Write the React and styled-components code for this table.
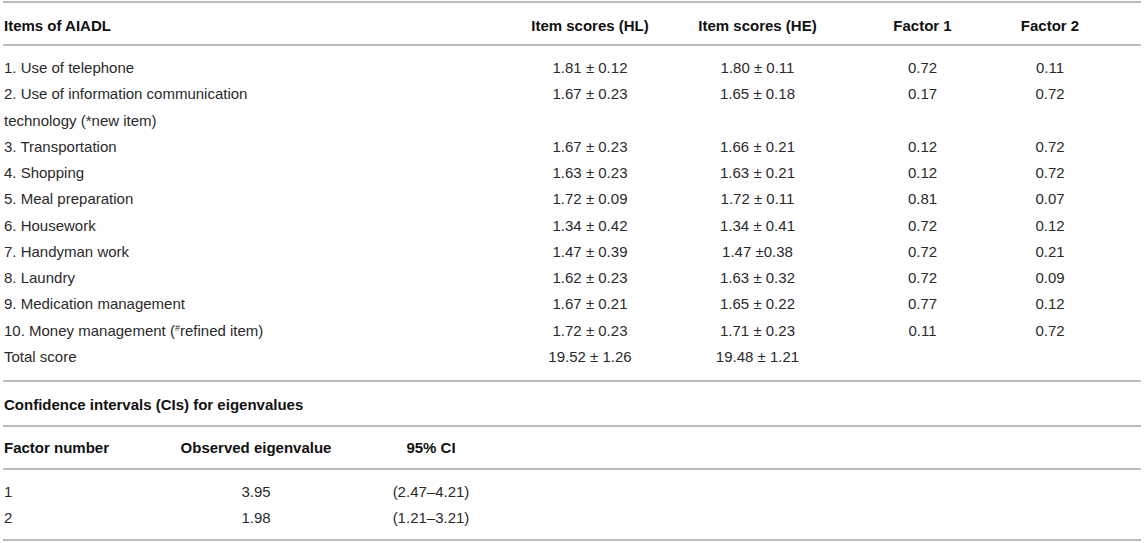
import styled, { createGlobalStyle } from "styled-components";

const GlobalStyle = createGlobalStyle`
  html, body {
    margin: 0;
    padding: 0;
    background: #ffffff;
  }
  body {
    font-family: "Liberation Sans", Arial, Helvetica, sans-serif;
    color: #2a2a2a;
  }
`;

const Page = styled.div`
  width: 1138px;
  padding: 1px 0 0 3px;
  font-size: 15px;
`;

const Rule = styled.div`
  height: 2px;
  background: #bdbdbd;
`;

const Grid = styled.div`
  display: grid;
  grid-template-columns: ${(p) => p.$cols};
  align-items: start;
`;

const HeadRow = styled(Grid)`
  height: ${(p) => p.$h || 40}px;
  align-items: center;
  padding-top: ${(p) => p.$pt || 0}px;
  box-sizing: border-box;
`;

const Body = styled.div`
  padding: ${(p) => p.$top}px 0 ${(p) => p.$bottom}px;
`;

const Row = styled(Grid)`
  min-height: ${(p) => p.$h}px;
  line-height: ${(p) => p.$h}px;
`;

const Cell = styled.div`
  padding-left: ${(p) => (p.$center ? 0 : 1)}px;
  text-align: ${(p) => (p.$center ? "center" : "left")};
  font-weight: ${(p) => (p.$bold ? 700 : 400)};
  color: ${(p) => (p.$bold ? "#111" : "#2a2a2a")};
  white-space: nowrap;

  sup {
    font-size: 9px;
    line-height: 0;
    vertical-align: 5px;
  }
`;

const Caption = styled.div`
  height: 43px;
  display: flex;
  align-items: center;
  padding: 2px 0 0 1px;
  box-sizing: border-box;
  font-weight: 700;
  color: #111;
`;

const mainCols = "502px 170px 165px 165px 90px";
const ciCols = "165px 176px 174px";

const items = [
  ["1. Use of telephone", "1.81 ± 0.12", "1.80 ± 0.11", "0.72", "0.11"],
  [
    <>
      2. Use of information communication
      <br />
      technology (*new item)
    </>,
    "1.67 ± 0.23",
    "1.65 ± 0.18",
    "0.17",
    "0.72",
  ],
  ["3. Transportation", "1.67 ± 0.23", "1.66 ± 0.21", "0.12", "0.72"],
  ["4. Shopping", "1.63 ± 0.23", "1.63 ± 0.21", "0.12", "0.72"],
  ["5. Meal preparation", "1.72 ± 0.09", "1.72 ± 0.11", "0.81", "0.07"],
  ["6. Housework", "1.34 ± 0.42", "1.34 ± 0.41", "0.72", "0.12"],
  ["7. Handyman work", "1.47 ± 0.39", "1.47 ±0.38", "0.72", "0.21"],
  ["8. Laundry", "1.62 ± 0.23", "1.63 ± 0.32", "0.72", "0.09"],
  ["9. Medication management", "1.67 ± 0.21", "1.65 ± 0.22", "0.77", "0.12"],
  [
    <>
      10. Money management (<sup>#</sup>refined item)
    </>,
    "1.72 ± 0.23",
    "1.71 ± 0.23",
    "0.11",
    "0.72",
  ],
  ["Total score", "19.52 ± 1.26", "19.48 ± 1.21", "", ""],
];

const eigen = [
  ["1", "3.95", "(2.47–4.21)"],
  ["2", "1.98", "(1.21–3.21)"],
];

export default function App() {
  return (
    <Page>
      <GlobalStyle />
      <Rule />
      <HeadRow $cols={mainCols} $h={41} $pt={3}>
        <Cell $bold>Items of AIADL</Cell>
        <Cell $bold $center>Item scores (HL)</Cell>
        <Cell $bold $center>Item scores (HE)</Cell>
        <Cell $bold $center>Factor 1</Cell>
        <Cell $bold $center>Factor 2</Cell>
      </HeadRow>
      <Rule />
      <Body $top={9} $bottom={10}>
        {items.map((r, i) => (
          <Row key={i} $cols={mainCols} $h={26.25}>
            <Cell>{r[0]}</Cell>
            <Cell $center>{r[1]}</Cell>
            <Cell $center>{r[2]}</Cell>
            <Cell $center>{r[3]}</Cell>
            <Cell $center>{r[4]}</Cell>
          </Row>
        ))}
      </Body>
      <Rule />
      <Caption>Confidence intervals (CIs) for eigenvalues</Caption>
      <Rule />
      <HeadRow $cols={ciCols} $h={41} $pt={0}>
        <Cell $bold>Factor number</Cell>
        <Cell $bold $center>Observed eigenvalue</Cell>
        <Cell $bold $center>95% CI</Cell>
      </HeadRow>
      <Rule />
      <Body $top={9} $bottom={8}>
        {eigen.map((r, i) => (
          <Row key={i} $cols={ciCols} $h={26}>
            <Cell>{r[0]}</Cell>
            <Cell $center>{r[1]}</Cell>
            <Cell $center>{r[2]}</Cell>
          </Row>
        ))}
      </Body>
      <Rule />
    </Page>
  );
}
